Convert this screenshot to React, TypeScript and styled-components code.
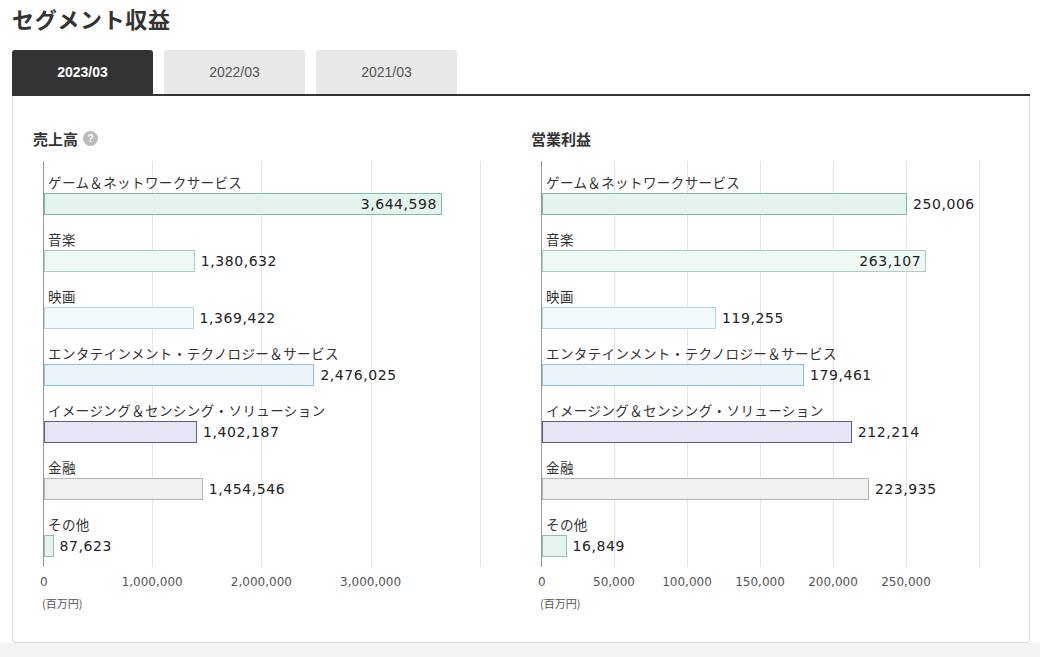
import styled, { createGlobalStyle } from "styled-components";

const Global = createGlobalStyle`
	body { margin: 0; background: #f4f4f4; font-family: "Noto Sans CJK JP", "Noto Sans", sans-serif; color: #333; }
`;

type Seg = { name: string; bg: string; border: string };
const segs: Seg[] = [
	{ name: "ゲーム＆ネットワークサービス", bg: "#e3f4ed", border: "#7dbda4" },
	{ name: "音楽", bg: "#eff8f5", border: "#a5d2c3" },
	{ name: "映画", bg: "#f3f8fc", border: "#b7d6e6" },
	{ name: "エンタテインメント・テクノロジー＆サービス", bg: "#ebf4fb", border: "#8cbfdc" },
	{ name: "イメージング＆センシング・ソリューション", bg: "#e5e5f4", border: "#5c5c8c" },
	{ name: "金融", bg: "#eff1f0", border: "#b4b6b5" },
	{ name: "その他", bg: "#e6f4ee", border: "#8fc0aa" },
];

const fmt = (n: number) => n.toLocaleString("en-US");

function Chart({ title, help, values, step, tickPx, ticks }: {
	title: string; help?: boolean; values: number[]; step: number; tickPx: number; ticks: number;
}) {
	const max = Math.max(...values);
	return (
		<ChartBox>
			<Heading>
				{title}
				{help && <Help>?</Help>}
			</Heading>
			<Plot $step={tickPx} style={{ width: tickPx * ticks + 1 }}>
				{values.map((v, i) => {
					const w = Math.max((v / step) * tickPx, 2);
					return (
						<Row key={segs[i].name}>
							<Label>{segs[i].name}</Label>
							<BarLine>
								<Bar $bg={segs[i].bg} $border={segs[i].border} style={{ width: w }}>
									{v === max && <Inner>{fmt(v)}</Inner>}
								</Bar>
								{v !== max && <Value>{fmt(v)}</Value>}
							</BarLine>
						</Row>
					);
				})}
			</Plot>
			<Axis>
				{Array.from({ length: ticks }, (_, i) => (
					<Tick key={i} style={{ left: i * tickPx }}>{fmt(i * step)}</Tick>
				))}
			</Axis>
			<Unit>(百万円)</Unit>
		</ChartBox>
	);
}

export default function App() {
	return (
		<Page>
			<Global />
			<Title>セグメント収益</Title>
			<Tabs>
				<Tab $active>2023/03</Tab>
				<Tab>2022/03</Tab>
				<Tab>2021/03</Tab>
			</Tabs>
			<Panel>
				<Chart title="売上高" help values={[3644598, 1380632, 1369422, 2476025, 1402187, 1454546, 87623]} step={1000000} tickPx={109.2} ticks={4} />
				<Chart title="営業利益" values={[250006, 263107, 119255, 179461, 212214, 223935, 16849]} step={50000} tickPx={73} ticks={6} />
			</Panel>
		</Page>
	);
}

const Page = styled.div`
	background: #fff;
	padding: 0 10px 0 12px;
	height: 643px;
`;

const Title = styled.h1`
	margin: 0;
	padding: 2px 0 0;
	height: 48px;
	font-size: 22px;
	font-weight: 700;
	color: #333;
	letter-spacing: 0.03em;
`;

const Tabs = styled.div`
	display: flex;
	gap: 11px;
	border-bottom: 2px solid #333;
`;

const Tab = styled.div<{ $active?: boolean }>`
	width: 141px;
	height: 44px;
	display: flex;
	align-items: center;
	justify-content: center;
	border-radius: 3px 3px 0 0;
	font-family: "Liberation Sans", Arial, sans-serif;
	font-size: 14px;
	background: ${(p) => (p.$active ? "#333" : "#e8e8e8")};
	color: ${(p) => (p.$active ? "#fff" : "#555")};
	font-weight: ${(p) => (p.$active ? 700 : 400)};
`;

const Panel = styled.div`
	display: flex;
	border: 1px solid #ddd;
	border-top: none;
	border-radius: 0 0 4px 4px;
	height: 547px;
	box-sizing: border-box;
	padding: 30px 0 0 20px;
	background: #fff;
`;

const ChartBox = styled.div`
	width: 508px;
`;

const Heading = styled.div`
	display: flex;
	align-items: center;
	gap: 5px;
	font-size: 15px;
	font-weight: 700;
	height: 24px;
	margin-bottom: 11px;
`;

const Help = styled.span`
	width: 15px;
	height: 15px;
	border-radius: 50%;
	background: #bbb;
	color: #fff;
	font-size: 10px;
	display: inline-flex;
	align-items: center;
	justify-content: center;
	font-family: "Liberation Sans", Arial, sans-serif;
`;

const Plot = styled.div<{ $step: number }>`
	margin-left: 10px;
	height: 406px;
	box-sizing: border-box;
	border-left: 1px solid #999;
	background-image: repeating-linear-gradient(to right, transparent 0, transparent ${(p) => p.$step - 1}px, #e4e4e4 ${(p) => p.$step - 1}px, #e4e4e4 ${(p) => p.$step}px);
	padding-top: 12px;
	display: flex;
	flex-direction: column;
	gap: 15px;
`;

const Row = styled.div`
	display: flex;
	flex-direction: column;
	gap: 1px;
`;

const Label = styled.div`
	font-size: 13.5px;
	line-height: 18px;
	padding-left: 4px;
	color: #333;
	white-space: nowrap;
	letter-spacing: 0.03em;
`;

const BarLine = styled.div`
	display: flex;
	align-items: center;
	height: 23px;
`;

const Bar = styled.div<{ $bg: string; $border: string }>`
	height: 22px;
	box-sizing: border-box;
	background: ${(p) => p.$bg};
	border: 1px solid ${(p) => p.$border};
	display: flex;
	align-items: center;
	justify-content: flex-end;
`;

const Inner = styled.span`
	font-family: "DejaVu Sans", sans-serif;
	font-size: 14px;
	letter-spacing: 0.04em;
	padding-right: 4px;
	color: #222;
`;

const Value = styled.span`
	font-family: "DejaVu Sans", sans-serif;
	font-size: 14px;
	letter-spacing: 0.04em;
	margin-left: 6px;
	color: #222;
`;

const Axis = styled.div`
	position: relative;
	margin-left: 10px;
	height: 28px;
`;

const Tick = styled.span`
	position: absolute;
	top: 8px;
	transform: translateX(-50%);
	font-family: "DejaVu Sans", sans-serif;
	font-size: 12px;
	color: #555;
	white-space: nowrap;
	&:first-child { transform: translateX(-3px); }
`;

const Unit = styled.div`
	margin-left: 9px;
	font-size: 11px;
	color: #555;
`;
